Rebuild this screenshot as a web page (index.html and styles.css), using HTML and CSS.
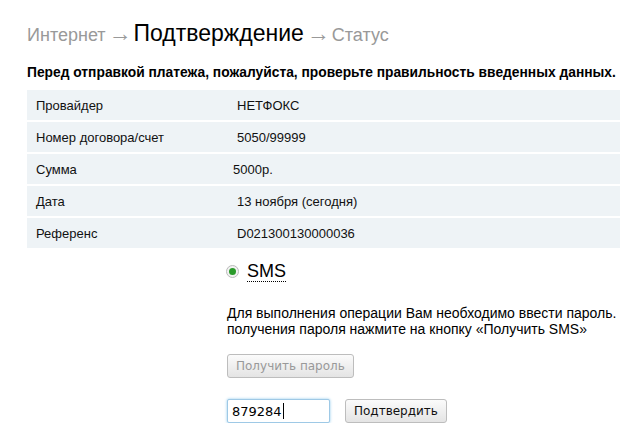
FILE: index.html
```html
<!DOCTYPE html>
<html lang="ru">
<head>
    <meta charset="UTF-8">
    <title>Подтверждение</title>
    <link rel="stylesheet" href="styles.css">
</head>
<body>
    <div class="steps">
        <span class="step">Интернет</span>
        <span class="arrow">&rarr;</span>
        <span class="step current">Подтверждение</span>
        <span class="arrow">&rarr;</span>
        <span class="step">Статус</span>
    </div>

    <p class="notice">Перед отправкой платежа, пожалуйста, проверьте правильность введенных данных.</p>

    <div class="details">
        <div class="row"><span class="label">Провайдер</span><span class="value">НЕТФОКС</span></div>
        <div class="row"><span class="label">Номер договора/счет</span><span class="value">5050/99999</span></div>
        <div class="row"><span class="label">Сумма</span><span class="value shift">5000р.</span></div>
        <div class="row"><span class="label">Дата</span><span class="value">13 ноября (сегодня)</span></div>
        <div class="row"><span class="label">Референс</span><span class="value">D021300130000036</span></div>
    </div>

    <div class="confirm">
        <label class="method">
            <span class="radio"><span class="dot"></span></span>
            <span class="method-name">SMS</span>
        </label>

        <p class="hint">Для выполнения операции Вам необходимо ввести пароль.<br>получения пароля нажмите на кнопку «Получить SMS»</p>

        <button class="btn" disabled>Получить пароль</button>

        <div class="code-row">
            <div class="code"><span>879284</span><span class="caret"></span></div>
            <button class="btn">Подтвердить</button>
        </div>
    </div>
</body>
</html>
```

FILE: styles.css
```css
body {
    margin: 0;
    padding: 20px 6px 0 27px;
    font-family: "Liberation Sans", Arial, sans-serif;
    color: #111;
    background: #fff;
}

.steps {
    display: flex;
    align-items: baseline;
    height: 26px;
    color: #999;
    font-size: 18px;
}
.steps .arrow {
    font-size: 23px;
    margin: 0 2px 0 3px;
    line-height: 20px;
}
.steps .current {
    color: #000;
    font-size: 23px;
}

.notice {
    margin: 19px 0 10px;
    font-size: 13.8px;
    font-weight: bold;
    color: #000;
    white-space: nowrap;
}

.details {
    display: flex;
    flex-direction: column;
    gap: 2px;
    width: 593px;
}
.row {
    display: flex;
    align-items: center;
    height: 30px;
    background-color: #eef3f6;
    font-size: 13px;
}
.label {
    width: 201px;
    padding-left: 9px;
}
.value.shift {
    margin-left: -4px;
}

.confirm {
    padding-left: 200px;
}

.method {
    display: flex;
    align-items: center;
    gap: 8px;
    margin-top: 11px;
    height: 24px;
}
.radio {
    width: 11px;
    height: 11px;
    border: 1px solid #bbb;
    border-radius: 50%;
    background: #f2f2f2;
    display: flex;
    align-items: center;
    justify-content: center;
    margin-left: -1px;
}
.dot {
    width: 7px;
    height: 7px;
    border-radius: 50%;
    background: #2a9a2a;
}
.method-name {
    font-size: 18px;
    color: #000;
    border-bottom: 1px dotted #000;
    line-height: 20px;
}

.hint {
    margin: 22px 0 17px;
    font-size: 14px;
    line-height: 16px;
    color: #000;
}

.btn {
    height: 24px;
    padding: 0 8px;
    font-family: "DejaVu Sans", sans-serif;
    font-size: 12px;
    color: #111;
    background: linear-gradient(#fbfbfb, #e4e4e4);
    border: 1px solid #bdbdbd;
    border-radius: 3px;
}
.btn:disabled {
    color: #999;
}

.code-row {
    display: flex;
    align-items: center;
    gap: 15px;
    margin-top: 21px;
}
.code {
    display: flex;
    align-items: center;
    width: 93px;
    height: 22px;
    padding: 0 4px;
    font-family: "DejaVu Sans", sans-serif;
    font-size: 13px;
    color: #000;
    background: #fff;
    border: 1px solid #9ec9e6;
    border-radius: 2px;
    box-shadow: 0 0 3px #8fc8ec;
}
.caret {
    width: 1px;
    height: 16px;
    margin-left: 1px;
    background: #000;
}
```
